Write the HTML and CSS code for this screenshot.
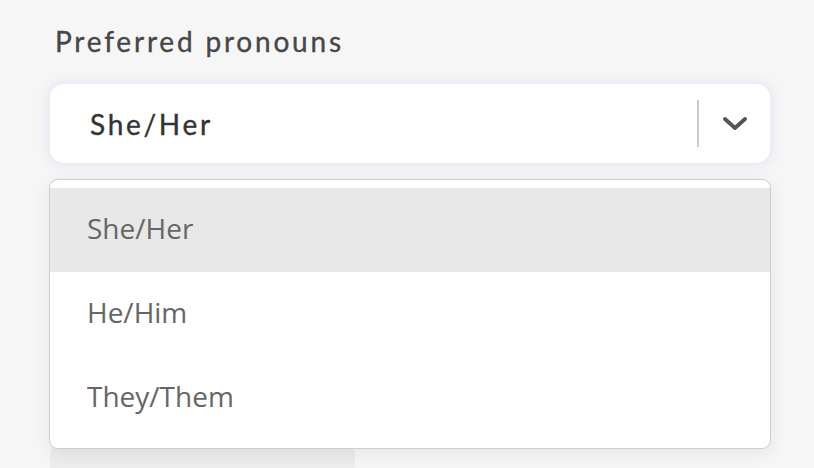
FILE: index.html
```html
<!DOCTYPE html>
<html>
<head>
<meta charset="utf-8">
<link rel="stylesheet" href="styles.css">
</head>
<body>
<div class="page">
  <label class="field-label">Preferred pronouns</label>
  <div class="select">
    <span class="select-value">She/Her</span>
    <span class="select-sep"></span>
    <span class="select-arrow">
      <svg width="24" height="14" viewBox="0 0 24 14"><path d="M2 2 L12 11 L22 2" fill="none" stroke="#555" stroke-width="3.8" stroke-linecap="round" stroke-linejoin="round"/></svg>
    </span>
  </div>
  <div class="menu-wrap">
    <div class="behind"></div>
    <ul class="menu">
      <li class="option active">She/Her</li>
      <li class="option">He/Him</li>
      <li class="option">They/Them</li>
    </ul>
  </div>
</div>
</body>
</html>
```
FILE: styles.css
```css
html, body {
  margin: 0;
  padding: 0;
  background: #f6f6f6;
  height: 100%;
  overflow: hidden;
}
.page {
  padding: 21px 44px 0 50px;
  font-family: "Lato", "Open Sans", sans-serif;
}
.field-label {
  display: block;
  padding-left: 5px;
  font-size: 28px;
  line-height: 40px;
  color: #474747;
  font-weight: 400;
  letter-spacing: 2.8px;
  -webkit-text-stroke: 0.35px #474747;
  margin-bottom: 23px;
}
.select {
  height: 79px;
  background: #fff;
  border-radius: 14px;
  box-shadow: 0 0 14px rgba(110, 130, 230, 0.18);
  display: flex;
  align-items: center;
  padding-left: 40px;
  box-sizing: border-box;
}
.select-value {
  flex: 1;
  font-size: 28px;
  font-weight: 400;
  color: #333;
  letter-spacing: 2.7px;
  -webkit-text-stroke: 0.35px #333;
}
.select-sep {
  width: 2px;
  height: 47px;
  background: #cccccc;
}
.select-arrow {
  width: 71px;
  display: flex;
  justify-content: center;
  align-items: center;
  padding-top: 1px;
}
.select-arrow svg { display: block; }
.menu-wrap {
  position: relative;
  margin-top: 16px;
  margin-left: -1px;
  margin-right: -1px;
}
.behind {
  position: absolute;
  left: 1px;
  top: 262px;
  width: 305px;
  height: 40px;
  border-radius: 14px;
  background: linear-gradient(#e9e9e9, #efefef);
}
.menu {
  position: relative;
  list-style: none;
  margin: 0;
  padding: 8px 0;
  background: #fff;
  border: 1.5px solid #cfcfcf;
  border-radius: 9px;
  box-shadow: 0 4px 18px rgba(0, 0, 0, 0.07);
  font-family: "Open Sans", "Noto Sans", sans-serif;
}
.option {
  height: 84px;
  display: flex;
  align-items: center;
  padding-left: 37px;
  padding-bottom: 4px;
  box-sizing: border-box;
  font-size: 28px;
  color: #666;
}
.option.active {
  background: #e8e8e8;
}
```
